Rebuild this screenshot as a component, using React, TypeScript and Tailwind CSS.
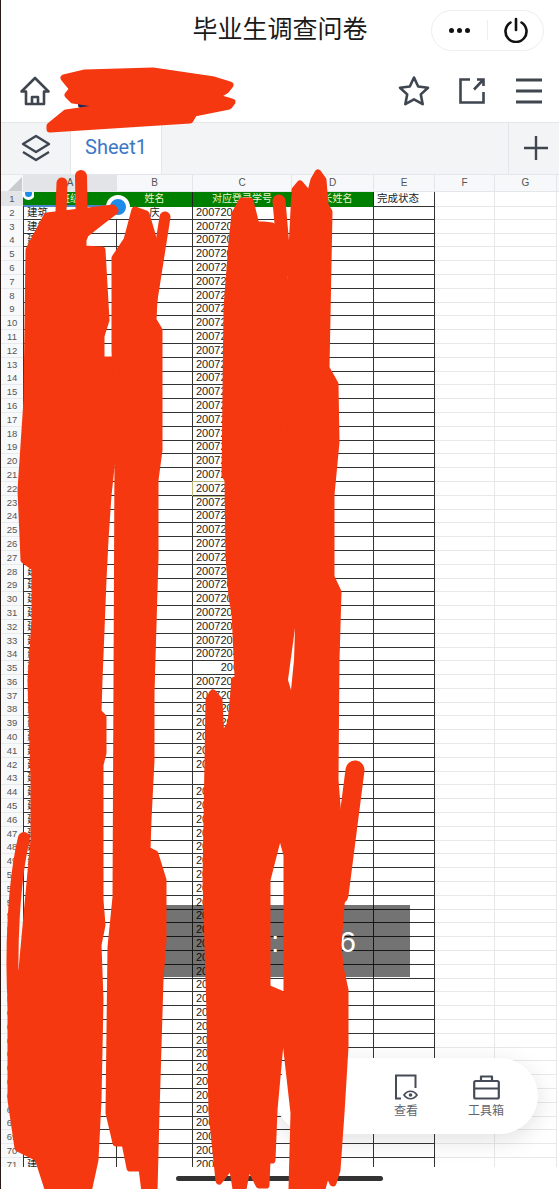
const RED = '#f5380f';

const rowCols = 'grid grid-cols-[22px_94px_76px_99px_82px_61px_60px_62px]';

function HomeIcon() {
  return (
    <svg width="32" height="32" viewBox="0 0 32 32" fill="none" stroke="#3f4650" strokeWidth="2.6" strokeLinejoin="round">
      <path d="M2.5 16.5 16 3l13.5 13.5h-4.5V29H7V16.5z" />
      <path d="M13 29v-7h6v7" />
    </svg>
  );
}

function StarIcon() {
  return (
    <svg width="32" height="32" viewBox="0 0 32 32" fill="none" stroke="#3f4650" strokeWidth="2.6" strokeLinejoin="round">
      <path d="m16 2.5 4.2 9 9.8 1.2-7.2 6.7 1.9 9.8L16 24.4l-8.7 4.8 1.9-9.8L2 12.7l9.8-1.2z" />
    </svg>
  );
}

function ShareIcon() {
  return (
    <svg width="28" height="28" viewBox="0 0 28 28" fill="none" stroke="#3f4650" strokeWidth="2.6">
      <path d="M12 2.5H2.5v23h23V15" />
      <path d="M19 2.5h6.5V9M25 3l-9 9.5" />
    </svg>
  );
}

function MenuIcon() {
  return (
    <svg width="26" height="26" viewBox="0 0 26 26" fill="none" stroke="#3f4650" strokeWidth="2.8">
      <path d="M0 2h26M0 13h26M0 24h26" />
    </svg>
  );
}

function LayersIcon() {
  return (
    <svg width="30" height="28" viewBox="0 0 30 28" fill="none" stroke="#3f4650" strokeWidth="2.4" strokeLinejoin="round">
      <path d="M15 2 28 10 15 18 2 10z" />
      <path d="m2 18 13 8 13-8" />
    </svg>
  );
}

function PowerIcon() {
  return (
    <svg width="26" height="26" viewBox="0 0 26 26" fill="none" stroke="#111" strokeWidth="2.6" strokeLinecap="round">
      <path d="M13 2v11" />
      <path d="M7.5 5.5a10.5 10.5 0 1 0 11 0" />
    </svg>
  );
}

function ViewIcon() {
  return (
    <svg width="24" height="26" viewBox="0 0 24 26" fill="none" stroke="#454c57" strokeWidth="2">
      <path d="M7 24.5H2V1.5h19.5V14" />
      <path d="M10 21c3.500-5 9.500-5 13 0-3.500 5-9.500 5-13 0z" fill="#fff" strokeWidth="1.700" />
      <circle cx="16.500" cy="21" r="1.800" fill="#454c57" stroke="none" />
    </svg>
  );
}

function ToolboxIcon() {
  return (
    <svg width="27" height="26" viewBox="0 0 27 26" fill="none" stroke="#454c57" strokeWidth="2.200" strokeLinejoin="round">
      <rect x="1.200" y="7" width="24.600" height="17.500" rx="1.500" />
      <path d="M1.200 14.500h24.600M8 7V2.500h11V7" />
    </svg>
  );
}

function Scribbles() {
  return (
    <svg className="absolute left-0 top-0 pointer-events-none" width="559" height="1189" viewBox="0 0 559 1189">
      <rect x="78" y="100" width="34" height="8" rx="3" fill="#1f2a5c" />
      <rect x="118" y="100" width="24" height="8" rx="3" fill="#4b5563" />
      <g fill={RED} stroke={RED} strokeWidth="7" strokeLinejoin="round" strokeLinecap="round">
        {/* toolbar */}
        <path d="M64 78 85 73 153 71 214 80 230 85 226 90 215 97 232 102 229 106 194 113 190 120 50 129 50 126 66 113 114 106 73 100 68 95 73 89z" />
        {/* column A */}
        <path d="M29 250 47 216 113 208 115 211 98 224 83 236 83 249 102 250 106 320 101 336 101 360 114 360 114 440 108 495 105 540 103 580 99 680 98 712 103 717 103 753 100 765 100 900 102 925 98 945 100 1000 98 1100 95 1160 88 1192 49 1192 38 1158 18 1148 11 1100 11 1000 22 970 27 915 34 840 34 780 31 680 35 620 35 568 24 560 21 490 27 400z" />
        {/* column B */}
        <path d="M115 258 127 240 135 210 146 214 153 238 156 260 153 320 159 330 159 450 155 480 155 557 151 693 151 760 148 820 147 850 155 854 163 880 163 940 160 980 156 1113 154 1192 145 1192 142 1168 130 1168 125 1143 116 1143 109 1113 111 947 116 897 117 680 118 455 115 350z" />
        {/* column C */}
        <path d="M235 214 242 201 250 201 256 225 264 225 272 226 284 272 283 470 279 833 267 880 267 988 281 994 281 1033 274 1110 272 1160 267 1160 266 1185 259 1185 248 1163 243 1189 236 1189 232 1164 219 1181 212 1113 210 1013 206 880 208 760 209 700 213 693 219 700 221 740 231 723 235 680 239 697 235 613 232 597 229 557 228 480 225 475 227 308 232 242z" />
        {/* column D */}
        <path d="M291 270 295 190 300 184 305 190 307 207 314 180 318 173 323 180 325 205 329 212 326 368 335 384 336 442 331 495 331 577 338 592 336 660 335 780 343 880 338 945 340 967 345 990 345 1047 341 1113 337 1170 333 1183 327 1170 322 1189 292 1189 294 1113 285 1033 287 994 287 855 281 833 281 500z" />
      </g>
      <g fill="none" stroke={RED} strokeLinecap="round">
        <path d="M62 183 60 240" strokeWidth="11" />
        <path d="M81 176 82 236" strokeWidth="12" />
        <path d="M165 217 152 300" strokeWidth="11" />
        <path d="M279 201 285 270" strokeWidth="13" />
        <path d="M355 770 339 895" strokeWidth="19" />
        <path d="M24 838C14 880 10 950 14 1010" strokeWidth="12" />
      </g>
      <path d="M295 628 288 680 291 690 294 660z" fill="#fff" />
    </svg>
  );
}

export default function App() {
  const rows = Array.from({ length: 71 }, (_, i) => i + 1);

  return (
    <div className="relative h-[1189px] w-[559px] overflow-hidden border-l border-[#2a1a15] bg-white font-['Liberation_Sans','Noto_Sans_CJK_SC',sans-serif]">
      <div className="grid h-[60px] grid-cols-[1fr_auto_1fr] items-center">
        <div />
        <div className="pb-[6px] text-[25px] leading-none text-[#1a1a1a] font-['Noto_Sans_CJK_SC',sans-serif]">毕业生调查问卷</div>
        <div className="mr-[15px] flex h-[41px] w-[113px] items-center justify-self-end rounded-full border border-[#eeeeee]">
          <div className="flex h-[20px] w-[56px] items-center justify-center gap-[3px] border-r border-[#eeeeee]">
            <span className="h-[5px] w-[5px] rounded-full bg-[#111]" />
            <span className="h-[5px] w-[5px] rounded-full bg-[#111]" />
            <span className="h-[5px] w-[5px] rounded-full bg-[#111]" />
          </div>
          <div className="flex flex-1 items-center justify-center">
            <PowerIcon />
          </div>
        </div>
      </div>

      <div className="flex h-[62px] items-center pl-[18px] pr-[17px]">
        <HomeIcon />
        <div className="flex-1" />
        <StarIcon />
        <div className="ml-[28px]"><ShareIcon /></div>
        <div className="ml-[30px]"><MenuIcon /></div>
      </div>

      <div className="flex h-[53px] border-y border-[#e4e6e9] bg-[#f3f4f6]">
        <div className="flex w-[69px] items-center justify-center pb-[2px]"><LayersIcon /></div>
        <div className="flex w-[92px] items-center justify-center border-x border-[#e4e6e9] bg-white pb-[3px] text-[20px] text-[#3d78c6] font-['Roboto',sans-serif]">Sheet1</div>
        <div className="flex-1" />
        <div className="flex w-[51px] items-center justify-center border-l border-[#e4e6e9] pl-[3px] pb-[2px]">
          <svg width="26" height="26" viewBox="0 0 26 26" stroke="#3f4650" strokeWidth="2.400"><path d="M13 1v24M1 13h24" /></svg>
        </div>
      </div>

      <div className={`${rowCols} h-[17px] border-b border-[#e4e6e9] bg-[#f6f8fa] text-[10px] leading-[16px] text-[#555]`}>
        <div className="flex items-end justify-end pr-[1px]">
          <div className="h-[14px] w-[14px] bg-[#c9cbce] [clip-path:polygon(100%_0,100%_100%,0_100%)]" />
        </div>
        <div className="bg-[#e2e4e7] text-center">A</div>
        <div className="border-r border-[#e4e6e9] text-center">B</div>
        <div className="border-r border-[#e4e6e9] text-center">C</div>
        <div className="border-r border-[#e4e6e9] text-center">D</div>
        <div className="border-r border-[#e4e6e9] text-center">E</div>
        <div className="border-r border-[#e4e6e9] text-center">F</div>
        <div className="border-r border-[#e4e6e9] text-center">G</div>
      </div>

      <div className="h-[975px] overflow-hidden">
        {rows.map((n) => (
          <div key={n} className={`${rowCols} h-[13.810px] text-[11px] leading-[13px] text-[#222]`}>
            <div className={`border-b border-[#e8eaed] text-center text-[9.500px] text-[#555] ${n === 1 ? 'bg-[#e2e4e7]' : 'bg-[#f7f9fb]'}`}>{n}</div>
            {n === 1 ? (
              <>
                <div className="border-b-2 border-[#4a86c8] bg-[#008000] text-center text-[10px] text-[#e8f5c8]">班级</div>
                <div className="border-r border-[#222] bg-[#008000] text-center text-[10px] text-[#e8f5c8]">姓名</div>
                <div className="border-r border-[#222] bg-[#008000] text-center text-[10px] text-[#e8f5c8]">对应登录学号</div>
                <div className="border-r border-[#222] bg-[#008000] text-center text-[10px] text-[#e8f5c8]">家长姓名</div>
                <div className="border-b border-r border-[#333] pl-[3px] text-[10.500px]">完成状态</div>
              </>
            ) : (
              <>
                <div className="overflow-hidden whitespace-nowrap border-b border-l border-r border-[#333] pl-[3px] text-[10.500px]">建筑</div>
                <div className="border-b border-r border-[#333] text-center text-[10.500px]">{n === 2 ? '庆' : ''}</div>
                <div className={`overflow-hidden whitespace-nowrap border-b border-r border-[#333] px-[3px] ${n === 35 ? 'text-right' : ''} ${n === 22 ? 'outline outline-1 outline-[#b8b878]' : ''}`}>
                  {n === 35 ? '20072040000' : n === 43 ? '' : '2007204'}
                </div>
                <div className="border-b border-r border-[#333]" />
                <div className="border-b border-r border-[#333]" />
              </>
            )}
            <div className="border-b border-r border-[#e8e8e8]" />
            <div className="border-b border-r border-[#e8e8e8]" />
          </div>
        ))}
      </div>

      <div className="absolute left-[21px] top-[192px] h-[11px] w-[12px] overflow-hidden">
        <div className="h-[13px] w-[13px] -translate-y-[5px] rounded-full border-[3px] border-white bg-[#1f8be8]" />
      </div>
      <div className="absolute left-[105px] top-[195px] h-[24px] w-[24px] rounded-full border-[4px] border-white bg-[#1f8be8]" />

      <div className="absolute left-[162px] top-[905px] flex h-[72px] w-[247px] items-center bg-black/55 pl-[108px] text-[30px] text-white">
        <span>:</span>
        <span className="ml-[60px]">6</span>
      </div>

      <div className="absolute left-[274px] top-[1058px] flex h-[76px] w-[263px] items-center justify-end rounded-full bg-white pr-[12px] shadow-[0_6px_24px_rgba(0,0,0,0.12)]">
        <div className="flex w-[80px] flex-col items-center gap-[3px] text-[12px] leading-[16px] text-[#5f6670]">
          <ViewIcon />
          <span>查看</span>
        </div>
        <div className="flex w-[80px] flex-col items-center gap-[3px] text-[12px] leading-[16px] text-[#5f6670]">
          <ToolboxIcon />
          <span>工具箱</span>
        </div>
      </div>

      <div className="absolute left-[175px] top-[1176px] h-[5px] w-[207px] rounded-full bg-[#333]" />

      <div className="absolute left-[-1px] top-0"><Scribbles /></div>
    </div>
  );
}
